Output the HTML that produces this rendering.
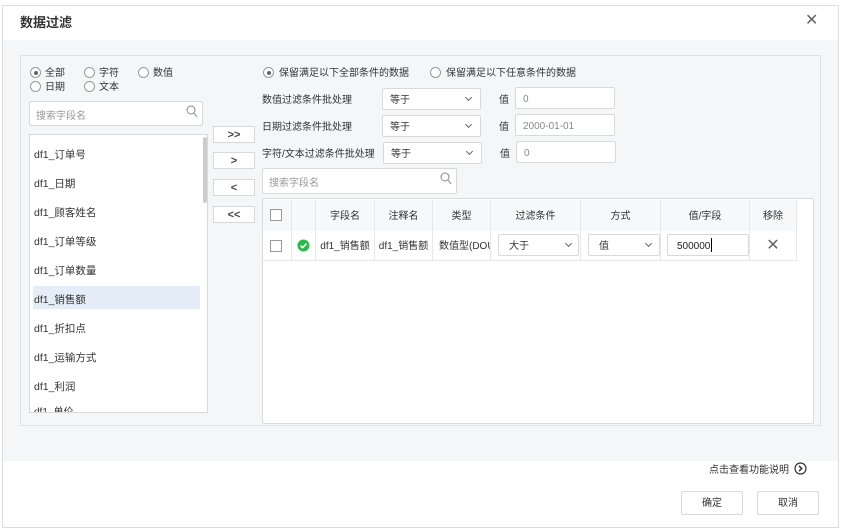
<!DOCTYPE html><html><head><meta charset="utf-8"><style>
*{box-sizing:border-box;margin:0;padding:0}
body{width:843px;height:532px;background:#fff;font-family:"Liberation Sans","Noto Sans CJK SC",sans-serif;font-size:10px;color:#333;position:relative;overflow:hidden}
.a{position:absolute;line-height:22px}
.box{position:absolute;background:#fff;border:1px solid #d9d9d9;border-radius:2px}
.box span.a{top:1px!important;line-height:21px}
.rad{position:absolute;width:11px;height:11px;border:1px solid #999;border-radius:50%;background:#fff}
.rad.on::after{content:"";position:absolute;left:2.5px;top:2.5px;width:4px;height:4px;border-radius:50%;background:#666}
.chev{position:absolute;width:5px;height:5px;border-right:1px solid #666;border-bottom:1px solid #666;transform:rotate(45deg)}
.btn{position:absolute;left:213px;width:42px;height:17px;background:#fff;border:1px solid #d9d9d9;text-align:center;font-size:11px;line-height:16px;color:#444;font-weight:bold}
.item{position:absolute;left:34px;font-size:10.5px;color:#333;line-height:22px}
.th{position:absolute;top:200px;height:31px;line-height:33px;text-align:center;color:#333;border-right:1px solid #e8e8e8;background:#f7f8fa}
.td{position:absolute;top:231px;height:29px;line-height:31px;text-align:center;border-right:1px solid #e8e8e8;white-space:nowrap;overflow:hidden}
.cb{position:absolute;width:12px;height:12px;border:1px solid #999;background:#fff}
</style></head><body>
<div class="a" style="left:2px;top:5px;width:837px;height:523px;border:1px solid #ddd;background:#fff"></div>
<div class="a" style="left:20px;top:12px;font-size:13px;font-weight:bold;color:#333">数据过滤</div>
<div class="a" style="left:805px;top:10px;font-size:16px;color:#666">✕</div>
<div class="a" style="left:3px;top:40px;width:835px;height:421px;background:#f5f6f8"></div>
<div class="a" style="left:20px;top:55px;width:801px;height:371px;border:1px solid #e0e0e0;background:#f5f6f8"></div>

<div class="rad on" style="left:30px;top:67px"></div><div class="a" style="left:45px;top:63px">全部</div>
<div class="rad" style="left:84px;top:67px"></div><div class="a" style="left:99px;top:63px">字符</div>
<div class="rad" style="left:138px;top:67px"></div><div class="a" style="left:153px;top:63px">数值</div>
<div class="rad" style="left:30px;top:81px"></div><div class="a" style="left:45px;top:77px">日期</div>
<div class="rad" style="left:84px;top:81px"></div><div class="a" style="left:99px;top:77px">文本</div>

<div class="box" style="left:29px;top:101px;width:174px;height:25px"></div>
<div class="a" style="left:36px;top:106px;color:#999">搜索字段名</div>
<svg class="a" style="left:186px;top:105px" width="12" height="13"><circle cx="5" cy="5" r="4" fill="none" stroke="#888"/><line x1="8" y1="8" x2="11" y2="12" stroke="#888"/></svg>

<div class="box" style="left:29px;top:134px;width:179px;height:279px;border-radius:0"></div>
<div class="a" style="left:203px;top:137px;width:4px;height:66px;background:#ccc;border-radius:2px"></div>
<div class="a" style="left:33px;top:286px;width:167px;height:23px;background:#e5eef8"></div>
<div class="item" style="top:144px">df1_订单号</div>
<div class="item" style="top:173px">df1_日期</div>
<div class="item" style="top:202px">df1_顾客姓名</div>
<div class="item" style="top:231px">df1_订单等级</div>
<div class="item" style="top:260px">df1_订单数量</div>
<div class="item" style="top:289px">df1_销售额</div>
<div class="item" style="top:318px">df1_折扣点</div>
<div class="item" style="top:347px">df1_运输方式</div>
<div class="item" style="top:376px">df1_利润</div>
<div class="a" style="left:30px;top:403px;width:176px;height:9px;overflow:hidden"><div style="position:absolute;left:4px;top:-1px;line-height:22px">df1_单价</div></div>

<div class="btn" style="top:126px">&gt;&gt;</div>
<div class="btn" style="top:152px">&gt;</div>
<div class="btn" style="top:179px">&lt;</div>
<div class="btn" style="top:206px">&lt;&lt;</div>

<div class="rad on" style="left:263px;top:67px"></div><div class="a" style="left:279px;top:63px">保留满足以下全部条件的数据</div>
<div class="rad" style="left:430px;top:67px"></div><div class="a" style="left:446px;top:63px">保留满足以下任意条件的数据</div>

<div class="a" style="left:262px;top:90px">数值过滤条件批处理</div>
<div class="a" style="left:262px;top:117px">日期过滤条件批处理</div>
<div class="a" style="left:262px;top:144px">字符/文本过滤条件批处理</div>
<div class="box" style="left:382px;top:88px;width:99px;height:22px"><span class="a" style="left:7px">等于</span><i class="chev" style="left:83px;top:6px"></i></div>
<div class="box" style="left:382px;top:115px;width:99px;height:22px"><span class="a" style="left:7px">等于</span><i class="chev" style="left:83px;top:6px"></i></div>
<div class="box" style="left:383px;top:142px;width:99px;height:22px"><span class="a" style="left:7px">等于</span><i class="chev" style="left:83px;top:6px"></i></div>
<div class="a" style="left:499px;top:90px">值</div><div class="a" style="left:499px;top:117px">值</div><div class="a" style="left:500px;top:144px">值</div>
<div class="box" style="left:515px;top:87px;width:100px;height:22px"><span class="a" style="left:7px;color:#888">0</span></div>
<div class="box" style="left:515px;top:114px;width:100px;height:22px"><span class="a" style="left:7px;color:#888">2000-01-01</span></div>
<div class="box" style="left:516px;top:141px;width:100px;height:22px"><span class="a" style="left:7px;color:#888">0</span></div>

<div class="box" style="left:262px;top:168px;width:195px;height:26px"></div>
<div class="a" style="left:269px;top:173px;color:#999">搜索字段名</div>
<svg class="a" style="left:440px;top:172px" width="12" height="13"><circle cx="5" cy="5" r="4" fill="none" stroke="#888"/><line x1="8" y1="8" x2="11" y2="12" stroke="#888"/></svg>

<div class="box" style="left:262px;top:198px;width:552px;height:226px"></div>
<div class="th" style="left:263px;width:29px"></div><div class="cb" style="left:270px;top:209px"></div>
<div class="th" style="left:292px;width:24px"></div>
<div class="th" style="left:316px;width:59px">字段名</div>
<div class="th" style="left:375px;width:58px">注释名</div>
<div class="th" style="left:433px;width:58px">类型</div>
<div class="th" style="left:491px;width:90px">过滤条件</div>
<div class="th" style="left:581px;width:80px">方式</div>
<div class="th" style="left:661px;width:89px">值/字段</div>
<div class="th" style="left:750px;width:47px">移除</div>
<div class="a" style="left:263px;top:260px;width:534px;height:1px;background:#e8e8e8"></div>
<div class="td" style="left:263px;width:29px"></div><div class="cb" style="left:270px;top:240px"></div>
<div class="td" style="left:292px;width:24px"></div>
<svg class="a" style="left:297px;top:239px" width="13" height="13"><circle cx="6.5" cy="6.5" r="6" fill="#2db84d"/><path d="M3.5 6.7l2 2 4-4" stroke="#fff" stroke-width="1.5" fill="none"/></svg>
<div class="td" style="left:316px;width:59px">df1_销售额</div>
<div class="td" style="left:375px;width:58px">df1_销售额</div>
<div class="td" style="left:433px;width:58px;text-align:left;padding-left:6px">数值型(DOUBLE)</div>
<div class="td" style="left:491px;width:90px"></div>
<div class="td" style="left:581px;width:80px"></div>
<div class="td" style="left:661px;width:89px"></div>
<div class="td" style="left:750px;width:47px;font-size:16px;color:#666;line-height:29px">✕</div>
<div class="box" style="left:498px;top:234px;width:81px;height:22px"><span class="a" style="left:10px">大于</span><i class="chev" style="left:67px;top:6px"></i></div>
<div class="box" style="left:588px;top:234px;width:72px;height:22px"><span class="a" style="left:10px">值</span><i class="chev" style="left:57px;top:6px"></i></div>
<div class="box" style="left:667px;top:234px;width:82px;height:22px"><span class="a" style="left:9px;color:#222">500000</span><span class="a" style="left:43px;top:3px!important;width:1px;height:14px;background:#000"></span></div>

<div class="a" style="left:709px;top:460px;font-size:10px">点击查看功能说明</div>
<svg class="a" style="left:794px;top:462px" width="13" height="13"><circle cx="6.5" cy="6.5" r="5.5" fill="none" stroke="#333" stroke-width="1.2"/><path d="M5 3.8l2.7 2.7-2.7 2.7" fill="none" stroke="#333" stroke-width="1.5"/></svg>
<div class="box" style="left:681px;top:491px;width:62px;height:24px;text-align:center;line-height:23px">确定</div>
<div class="box" style="left:757px;top:491px;width:62px;height:24px;text-align:center;line-height:23px">取消</div>
</body></html>
